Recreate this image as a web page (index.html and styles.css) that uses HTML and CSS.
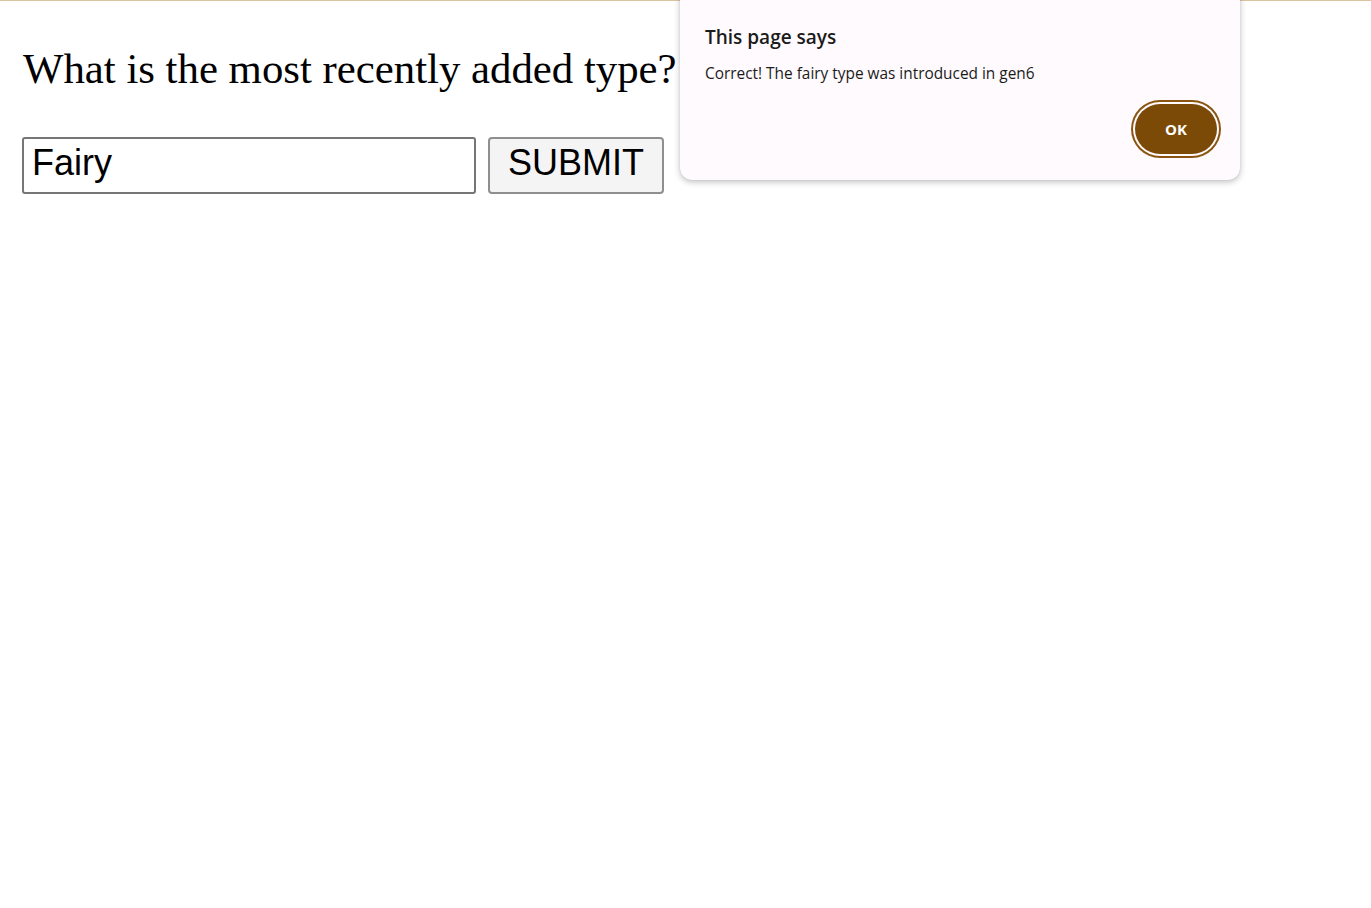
FILE: index.html
```html
<!DOCTYPE html>
<html>
<head>
<meta charset="utf-8">
<link rel="stylesheet" href="styles.css">
</head>
<body>
<div class="topline"></div>
<main class="page">
  <h1 class="question">What is the most recently added type?</h1>
  <form class="answer-form">
    <input class="answer-input" type="text" value="Fairy">
    <button class="submit-btn" type="button">SUBMIT</button>
  </form>
</main>
<div class="dialog">
  <div class="dialog-title">This page says</div>
  <div class="dialog-msg">Correct! The fairy type was introduced in gen6</div>
  <div class="dialog-actions">
    <button class="ok-btn" type="button">OK</button>
  </div>
</div>
</body>
</html>
```
FILE: styles.css
```css
html, body {
  margin: 0;
  padding: 0;
  background: #ffffff;
}
.topline {
  height: 1px;
  background: #dcc4a2;
}
.page {
  padding: 0 22px;
}
.question {
  font-family: "Liberation Serif", "Times New Roman", serif;
  font-weight: normal;
  font-size: 42.8px;
  line-height: 50px;
  margin: 43px 0 0 1px;
  color: #000;
}
.answer-form {
  display: flex;
  gap: 12px;
  margin-top: 43px;
}
.answer-input {
  box-sizing: border-box;
  width: 454px;
  height: 57px;
  font-family: "Liberation Sans", Arial, sans-serif;
  font-size: 36px;
  padding: 0 8px 5px;
  border: 2px solid #767676;
  border-radius: 3px;
  color: #000;
  margin: 0;
}
.submit-btn {
  box-sizing: border-box;
  width: 176px;
  height: 57px;
  font-family: "Liberation Sans", Arial, sans-serif;
  font-size: 36px;
  background: #f4f4f4;
  border: 2px solid #8f8f8f;
  border-radius: 4px;
  color: #000;
  margin: 0;
  padding: 0 0 6px;
}
.dialog {
  position: absolute;
  left: 680px;
  top: -12px;
  width: 560px;
  height: 192px;
  box-sizing: border-box;
  background: #fffafd;
  border-radius: 12px;
  box-shadow: 0 2px 6px rgba(0,0,0,0.25), 0 0 1px rgba(0,0,0,0.2);
  padding: 36px 20px 0 25px;
  font-family: "Open Sans", "Noto Sans", sans-serif;
  color: #1b1b1b;
}
.dialog-title {
  font-size: 19px;
  font-weight: 600;
  line-height: 26px;
}
.dialog-msg {
  font-size: 15.4px;
  line-height: 20px;
  margin-top: 14px;
}
.dialog-actions {
  display: flex;
  justify-content: flex-end;
  margin-top: 20px;
}
.ok-btn {
  box-sizing: border-box;
  width: 82px;
  height: 50px;
  border-radius: 25px;
  background: #7c4a07;
  border: none;
  color: #fff;
  font-family: "Open Sans", "Noto Sans", sans-serif;
  font-weight: 700;
  font-size: 15px;
  box-shadow: 0 0 0 2px #fffafd, 0 0 0 4px #8a5511;
  margin-right: 3px;
}
```
